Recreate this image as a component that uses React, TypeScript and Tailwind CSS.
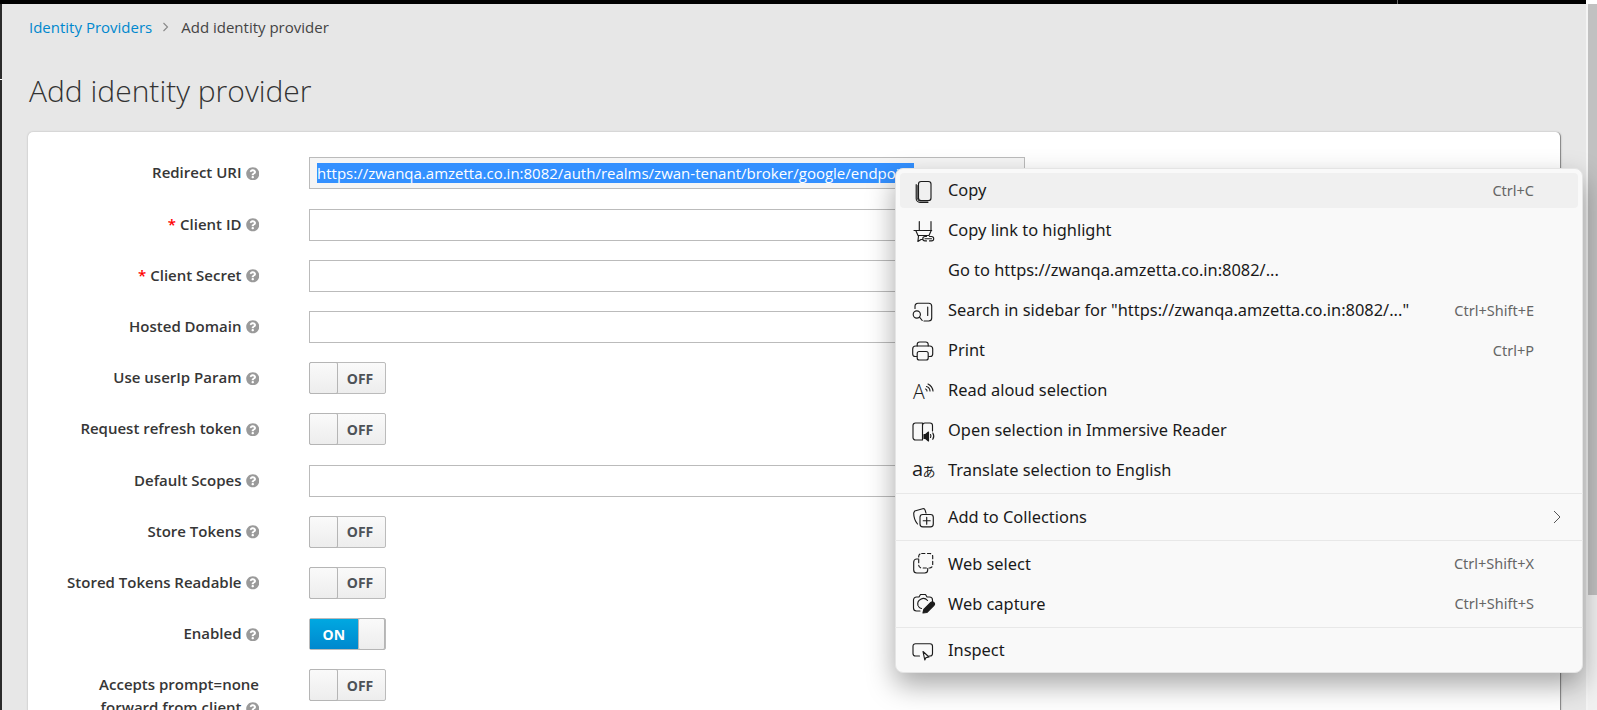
import React from "react";
import { FaQuestionCircle } from "react-icons/fa";

const S = ({ children }: { children: React.ReactNode }) => (
  <svg width="24" height="24" viewBox="0 0 24 24" fill="none" stroke="#1c1c1c" strokeWidth="1.15" strokeLinecap="round" strokeLinejoin="round" className="shrink-0">
    {children}
  </svg>
);

const Icons: Record<string, React.ReactNode> = {
  copy: (
    <S>
      <rect x="6.5" y="2.5" width="12.5" height="19" rx="2.6" />
      <path d="M4.2 5.5V19.5a3.8 3.8 0 0 0 3.8 3.8h8" />
      <path d="M5.3 6.5V19a3 3 0 0 0 3 3H16" strokeWidth="0.8" />
    </S>
  ),
  highlight: (
    <S>
      <path d="M7.3 2.5V11.5M19 2.5V11.5M2 11.5H19.7" />
      <path d="M4 12l2 4.5h11l2-4.5" />
      <path d="M6.5 17l-.6 5.5 3.1-2h1.5" />
      <path d="M14.5 17.5H13a2.2 2.2 0 0 0 0 4.4h1.5M17.5 17.5H19.5a2.2 2.2 0 0 1 0 4.4H17.5M13 19.7h6.5" />
    </S>
  ),
  search: (
    <S>
      <path d="M3 9.5V7.2a3 3 0 0 1 3-3H16.7a3 3 0 0 1 3 3V19a3 3 0 0 1-3 3H12" />
      <circle cx="4.8" cy="15.5" r="3.6" />
      <path d="M7.5 18.2l2.7 3.3M15.7 8V16.5" />
    </S>
  ),
  print: (
    <S>
      <g transform="translate(-1.3 0)">
        <path d="M6.5 7V5.5a2.5 2.5 0 0 1 2.5-2.5h6a2.5 2.5 0 0 1 2.5 2.5V7" />
        <path d="M6 17.5H4.5A2.5 2.5 0 0 1 2 15V10a3 3 0 0 1 3-3h14a3 3 0 0 1 3 3v5a2.5 2.5 0 0 1-2.5 2.5H18" />
        <rect x="6.5" y="12.5" width="11" height="8.5" rx="2" />
      </g>
    </S>
  ),
  read: (
    <svg width="24" height="24" viewBox="0 0 24 24" fill="none" stroke="#1c1c1c" strokeWidth="1.15" strokeLinecap="round" className="shrink-0 overflow-visible">
      <text x="1" y="19.5" fontSize="19.5" fontFamily="'Open Sans', sans-serif" fontWeight="300" fill="#1c1c1c" stroke="none">A</text>
      <path d="M16 5a9 9 0 0 1 5 7M14.5 7.5a5 5 0 0 1 3.5 4.5M13.5 10a2 2 0 0 1 1.5 2" />
    </svg>
  ),
  reader: (
    <S>
      <g transform="translate(-1.5 0)">
        <path d="M12 21H5a2.5 2.5 0 0 1-2.5-2.5V6.5A2.5 2.5 0 0 1 5 4h7V21zM12 6.500a2.500 2.500 0 0 1 2.500-2.500h5a2.500 2.500 0 0 1 2.500 2.500V12" />
        <path d="M13.5 15.5h1.500l3-2.500v9l-3-2.500h-1.500z" fill="#1c1c1c" />
        <path d="M20 15.5a3 3 0 0 1 0 3M22.3 14a6 6 0 0 1 0 6.300" />
      </g>
    </S>
  ),
  translate: (
    <svg width="24" height="24" viewBox="0 0 24 24" className="shrink-0 overflow-visible">
      <text x="0" y="17" fontSize="20" fontFamily="'Open Sans', sans-serif" fill="#1c1c1c">a</text>
      <text x="10.5" y="17" fontSize="13" fontFamily="'Noto Sans CJK JP', sans-serif" fill="#1c1c1c">あ</text>
    </svg>
  ),
  collections: (
    <S>
      <path d="M5.5 19C3 16 1.700 12 1.700 8l1-2 8-2.200a2 2 0 0 1 2.400 1.300l.9 3" />
      <rect x="8" y="9.5" width="13.3" height="12.3" rx="2.8" />
      <path d="M14.7 12.2V19.2M11.2 15.7H18.2" />
    </S>
  ),
  select: (
    <S>
      <g transform="translate(-0.8 -1)">
        <path d="M7.5 8H5.5a3 3 0 0 0-3 3v8a3 3 0 0 0 3 3h8a3 3 0 0 0 3-3v-1.500" />
        <rect x="7.5" y="2.5" width="14" height="14.5" rx="3" strokeDasharray="3.2 2.6" />
      </g>
    </S>
  ),
  capture: (
    <S>
      <g transform="translate(-1 -1.5)">
        <path d="M9 20.5H5.5a3 3 0 0 1-3-3V9.500a3 3 0 0 1 3-3H8l1.500-2.500h5L16 6.500h2.500a3 3 0 0 1 3 3V11" />
        <path d="M7 15a5.5 5.5 0 0 1 9.500-5" />
        <path d="M7.5 16a5 5 0 0 0 3 2" />
        <path d="M12 22.5l.8-3.500 7-7a2 2 0 0 1 3 3l-7 7z" fill="#1c1c1c" />
      </g>
    </S>
  ),
  inspect: (
    <S>
      <path d="M7.5 17H3.500a2.500 2.500 0 0 1-2.500-2.500V7.200a2.500 2.500 0 0 1 2.500-2.500h14.500a2.500 2.500 0 0 1 2.500 2.500v7.300a2.500 2.500 0 0 1-2.500 2.500h-1" />
      <path d="M11 12.5l6 5.500-3 .6-1.200 2.400z" />
    </S>
  ),
};

const Help = () => <FaQuestionCircle className="ml-[4px] inline-block align-[-2px] text-[13.5px] text-[#9a9a9a]" />;

const Label = ({ children, req }: { children: React.ReactNode; req?: boolean }) => (
  <div className="w-[231px] shrink-0 pt-[4px] text-right text-[15px] leading-[23px] font-semibold text-[#363636]">
    {req && <span className="mr-[4px] text-[#ff0000]">*</span>}
    {children}
  </div>
);

const TextInput = ({ children, ro }: { children?: React.ReactNode; ro?: boolean }) => (
  <div className={`flex h-[32px] w-[716px] items-center border border-[#bbbbbb] px-[7px] text-[15px] ${ro ? "bg-[#f5f5f5]" : "bg-white"}`}>
    {children}
  </div>
);

const Toggle = ({ on }: { on?: boolean }) =>
  on ? (
    <div className="flex h-[32px] w-[77px] rounded-[2px] border border-[#bbbbbb]">
      <div className="flex w-[49px] items-center justify-center bg-gradient-to-b from-[#00a8e1] to-[#0088ce] text-[14px] font-bold text-white">ON</div>
      <div className="-my-px w-[28px] rounded-[2px] border border-[#b5b5b5] bg-gradient-to-b from-[#fafafa] to-[#ededed]" />
    </div>
  ) : (
    <div className="flex h-[32px] w-[77px] rounded-[2px] border border-[#bbbbbb] bg-gradient-to-b from-[#fafafa] to-[#ededed]">
      <div className="-my-px -ml-px w-[29px] rounded-[2px] border border-[#b5b5b5] bg-gradient-to-b from-[#fafafa] to-[#ededed]" />
      <div className="flex flex-1 items-center justify-center pr-[3px] text-[14px] font-bold text-[#4d5258]">OFF</div>
    </div>
  );

const Row = ({ label, req, children }: { label: React.ReactNode; req?: boolean; children: React.ReactNode }) => (
  <div className="flex min-h-[33px] items-start gap-[50px]">
    <Label req={req}>{label}<Help /></Label>
    {children}
  </div>
);

const Item = ({ icon, text, hint, sub, active }: { icon?: string; text: string; hint?: string; sub?: boolean; active?: boolean }) => (
  <div className={`flex h-[35px] shrink-0 items-center rounded-[4px] pl-[12px] ${sub ? "pr-[17px]" : "pr-[44px]"} ${active ? "bg-[#f0f0f0]" : ""}`}>
    <div className="flex h-[24px] w-[24px] shrink-0 items-center justify-center">{icon && Icons[icon]}</div>
    <span className="ml-[12px] flex-1 text-[16.4px] text-[#1a1a1a]">{text}</span>
    {hint && <span className="text-[14.5px] text-[#666666]">{hint}</span>}
    {sub && (
      <svg width="8" height="14" viewBox="0 0 8 14" fill="none" stroke="#555555" strokeWidth="1">
        <path d="M1 1l6 6-6 6" />
      </svg>
    )}
  </div>
);

const Div = () => <div className="-mx-[5px] my-[0.35px] h-px shrink-0 bg-[#e8e8e8]" />;

export default function App() {
  return (
    <div className="relative flex h-[710px] w-[1597px] flex-col overflow-hidden bg-white font-['Open_Sans',sans-serif]">
      <div className="flex h-[4px] w-[1586px] shrink-0 justify-end bg-black pr-[188px]">
        <div className="h-full w-px bg-[#666666]" />
      </div>
      <div className="flex min-h-0 flex-1">
        <div className="w-[2px] shrink-0 bg-[#2b2b2b] pt-[75px]">
          <div className="h-px bg-white" />
        </div>
        <div className="w-[1584px] shrink-0 bg-[#e7e7e7] pl-[26px]">
          <div className="flex h-[46px] items-center pl-[1px] text-[15px]">
            <span className="text-[#0088ce]">Identity Providers</span>
            <svg className="mr-[12px] ml-[10px]" width="7" height="10" viewBox="0 0 7 10" fill="none" stroke="#888888" strokeWidth="1.1"><path d="M1.5 1l4 4-4 4" /></svg>
            <span className="text-[#444444]">Add identity provider</span>
          </div>
          <h1 className="mt-[19px] pl-[1px] text-[30px] leading-[44px] font-light text-[#333333]">Add identity provider</h1>
          <div className="mt-[19px] h-[700px] w-[1533px] rounded-[5px] border-r border-[#8c8c8c] bg-white pt-[25.4px] shadow-[0_0_2px_rgba(0,0,0,0.25)]">
            <div className="flex flex-col gap-[18.2px]">
              <Row label="Redirect URI">
                <TextInput ro>
                  <span className="whitespace-nowrap bg-[#3390ff] leading-[20px] text-white">https://zwanqa.amzetta.co.in:8082/auth/realms/zwan-tenant/broker/google/endpoint</span>
                </TextInput>
              </Row>
              <Row label="Client ID" req><TextInput /></Row>
              <Row label="Client Secret" req><TextInput /></Row>
              <Row label="Hosted Domain"><TextInput /></Row>
              <Row label="Use userIp Param"><Toggle /></Row>
              <Row label="Request refresh token"><Toggle /></Row>
              <Row label="Default Scopes"><TextInput /></Row>
              <Row label="Store Tokens"><Toggle /></Row>
              <Row label="Stored Tokens Readable"><Toggle /></Row>
              <Row label="Enabled"><Toggle on /></Row>
              <Row label={<>Accepts prompt=none<br />forward from client</>}><Toggle /></Row>
            </div>
          </div>
        </div>
        <div className="flex w-[11px] shrink-0 flex-col border-l-2 border-[#f4f4f4] bg-[#f1f1f1]">
          <div className="h-[591px] bg-[#c1c1c1]" />
        </div>
      </div>

      <div className="absolute top-[168px] left-[895px] flex w-[688px] flex-col gap-[5px] rounded-[8px] border border-[#e4e4e4] bg-[#f9f9f9] p-[4px] font-['Noto_Sans',sans-serif] shadow-[0_12px_28px_rgba(0,0,0,0.35)]">
        <Item icon="copy" text="Copy" hint="Ctrl+C" active />
        <Item icon="highlight" text="Copy link to highlight" />
        <Item text="Go to https://zwanqa.amzetta.co.in:8082/..." />
        <Item icon="search" text={'Search in sidebar for "https://zwanqa.amzetta.co.in:8082/..."'} hint="Ctrl+Shift+E" />
        <Item icon="print" text="Print" hint="Ctrl+P" />
        <Item icon="read" text="Read aloud selection" />
        <Item icon="reader" text="Open selection in Immersive Reader" />
        <Item icon="translate" text="Translate selection to English" />
        <Div />
        <Item icon="collections" text="Add to Collections" sub />
        <Div />
        <Item icon="select" text="Web select" hint="Ctrl+Shift+X" />
        <Item icon="capture" text="Web capture" hint="Ctrl+Shift+S" />
        <Div />
        <Item icon="inspect" text="Inspect" />
      </div>
    </div>
  );
}
